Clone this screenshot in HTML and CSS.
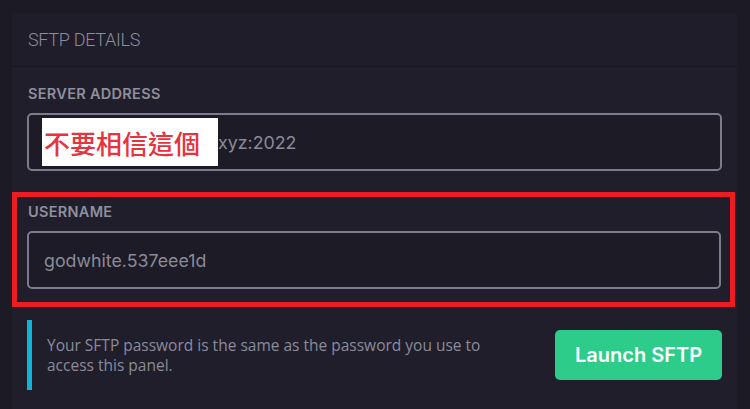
FILE: index.html
```html
<!DOCTYPE html>
<html>
<head>
<meta charset="utf-8">
<link rel="stylesheet" href="styles.css">
</head>
<body>
<div class="panel">
  <div class="panel-head">SFTP DETAILS</div>
  <div class="panel-body">
    <div class="field">
      <div class="label">SERVER ADDRESS</div>
      <div class="input">
        <span class="mask">不要相信這個</span><span class="value">xyz:2022</span>
      </div>
    </div>
    <div class="field highlight">
      <div class="label">USERNAME</div>
      <div class="input"><span class="value">godwhite.537eee1d</span></div>
    </div>
    <div class="footer">
      <div class="note">Your SFTP password is the same as the password you use to access this panel.</div>
      <button class="launch">Launch SFTP</button>
    </div>
  </div>
</div>
</body>
</html>
```
FILE: styles.css
```css
html, body {
  margin: 0;
  padding: 0;
  background: #1b1a25;
  font-family: Inter, "Noto Sans", sans-serif;
}
.panel {
  margin: 13px 13px 0 12px;
  background: #1f1e2a;
  height: 396px;
}
.panel-head {
  height: 54px;
  box-sizing: border-box;
  border-bottom: 1px solid #181720;
  background: #1e1d29;
  padding-left: 16px;
  display: flex;
  align-items: center;
  color: #8c8c9c;
  font-family: Roboto, sans-serif;
  font-size: 18px;
  letter-spacing: -0.3px;
  font-weight: 300;
}
.panel-body {
  padding: 14px 0 0 0;
}
.field {
  padding: 0 15px 0 15px;
}
.label {
  color: #8f8f9d;
  font-size: 14.5px;
  font-weight: 600;
  letter-spacing: 0.3px;
  padding-left: 1px;
  height: 32px;
  line-height: 22px;
  padding-top: 2px;
  box-sizing: border-box;
}
.input {
  height: 58px;
  box-sizing: border-box;
  border: 2px solid #7c7b8b;
  border-radius: 5px;
  background: #1c1b26;
  display: flex;
  align-items: center;
  padding-left: 15px;
}
.value {
  color: #8a8a99;
  font-size: 17.8px;
}
.mask {
  background: #ffffff;
  color: #e8323c;
  font-family: "Noto Sans CJK TC", sans-serif;
  font-weight: 500;
  font-size: 26px;
  height: 48px;
  width: 176px;
  box-sizing: border-box;
  display: flex;
  align-items: center;
  padding-left: 2px;
  margin-left: -2px;
}
.field:first-child {
  margin-bottom: 21px;
}
.highlight {
  border: 5px solid #ed1c24;
  padding: 2px 9px 13px 10px;
  margin-right: 2px;
}
.footer {
  display: flex;
  align-items: center;
  padding: 13px 15px 0 15px;
}
.note {
  flex: 1;
  border-left: 5px solid #0fb4d6;
  padding: 15px 0 15px 15px;
  color: #8b8b9c;
  font-family: "Open Sans", sans-serif;
  font-size: 15.5px;
  line-height: 20px;
  height: 70px;
  box-sizing: border-box;
  margin-right: 60px;
}
.launch {
  width: 167px;
  height: 50px;
  border: none;
  border-radius: 5px;
  background: #2ecc8a;
  color: #ffffff;
  font-family: Inter, sans-serif;
  font-weight: 600;
  font-size: 20px;
}
```
